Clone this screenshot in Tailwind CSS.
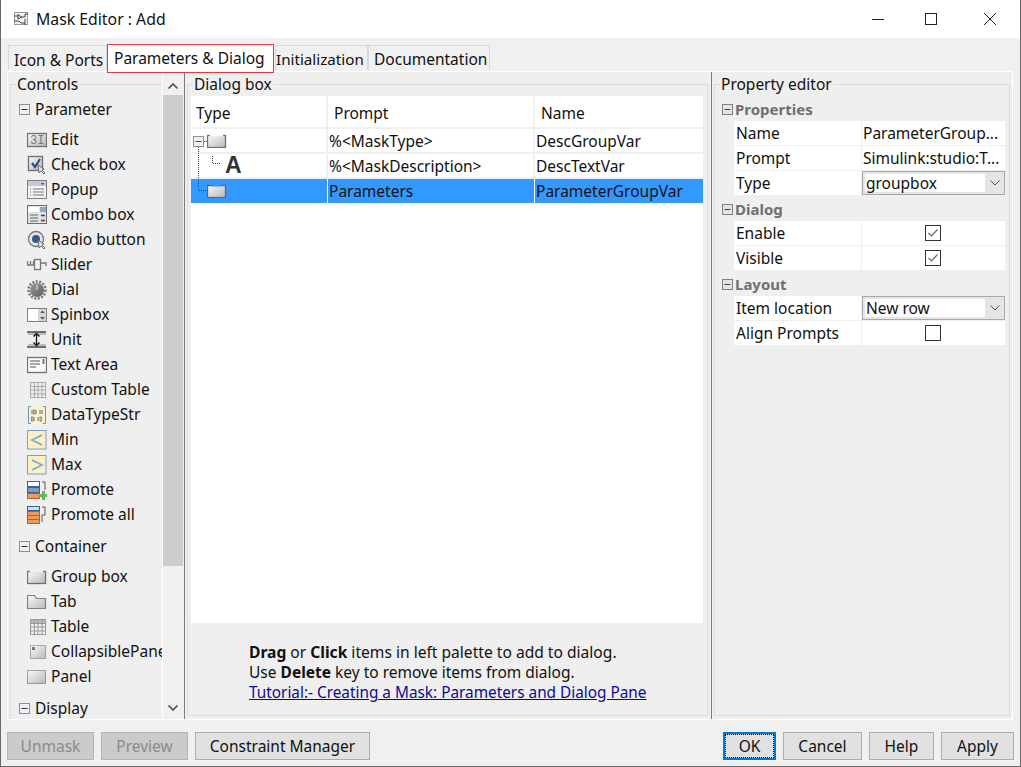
<!DOCTYPE html>
<html lang="en">
<head>
  <meta charset="UTF-8" />
  <title>Mask Editor : Add</title>
  <script src="https://cdn.jsdelivr.net/npm/@tailwindcss/browser@4"></script>
</head>
<body class="bg-[#555]">
<svg width="0" height="0" class="absolute"><defs>
  <linearGradient id="fade" x1="0" y1="0" x2="1" y2="1"><stop offset="0" stop-color="#fafafa"/><stop offset="1" stop-color="#b8b8b8"/></linearGradient>
  <linearGradient id="dial" x1="0" y1="0" x2="1" y2="1"><stop offset="0" stop-color="#9a9a9a"/><stop offset="1" stop-color="#5e5e5e"/></linearGradient>
</defs></svg>
<div class="w-[1021px] h-[767px] overflow-hidden flex flex-col bg-[#f0f0f0] border-x border-b border-[#6a6a6a] font-['Noto_Sans',sans-serif] text-[15.5px] leading-none text-[#111]">

  <!-- title bar -->
  <header class="h-[38px] shrink-0 bg-white flex items-center pl-[12px]">
    <svg width="16" height="16" viewBox="0 0 16 16" class="mr-[7px]" fill="none" stroke="#444"><rect x="1.500" y="1.500" width="13" height="12" fill="#f4f4f4" stroke="#999"/><path d="M1 5h4M5 3v5l4-2-4-2M9 6h3v-3h3M1 10h5l2 2h4M12 8v6"/></svg>
    <span class="text-[15.8px] mt-[2px]">Mask Editor : Add</span>
    <div class="ml-auto flex items-center">
      <svg width="12" height="12" viewBox="0 0 12 12" class="mr-[41px]" stroke="#222" fill="none"><path d="M0 6.500h12"/></svg>
      <svg width="12" height="12" viewBox="0 0 12 12" class="mr-[46px]" stroke="#222" fill="none"><rect x=".5" y=".5" width="11" height="11"/></svg>
      <svg width="14" height="14" viewBox="0 0 14 14" class="mr-[23px]" stroke="#222" fill="none"><path d="M1 1l12 12M13 1L1 13"/></svg>
    </div>
  </header>

  <!-- tabs -->
  <nav class="h-[33px] shrink-0 flex items-end pl-[7px]">
    <div class="h-[25px] w-[99px] mb-[1px] bg-[#f0f0f0] border border-b-0 border-[#d9d9d9] flex items-center pl-[5px] pt-[5px]">Icon &amp; Ports</div>
    <div class="h-[29px] w-[167px] bg-white border border-[#e8383d] flex items-center pl-[6px] -mb-[2px] z-10">Parameters &amp; Dialog</div>
    <div class="h-[25px] w-[93px] mb-[1px] ml-[1px] bg-[#f0f0f0] border border-b-0 border-[#d9d9d9] flex items-center pt-[4px] text-[15.2px]">Initialization</div>
    <div class="h-[25px] w-[122px] mb-[1px] bg-[#f0f0f0] border border-b-0 border-[#d9d9d9] flex items-center pl-[5px] pt-[4px]">Documentation</div>
  </nav>

  <!-- main frame -->
  <main class="h-[649px] shrink-0 ml-[6px] mr-[7px] flex bg-[#efefef] border border-white">

    <!-- controls palette -->
    <section class="w-[176px] shrink-0 flex relative overflow-hidden">
      <span class="absolute left-[8px] top-[5px] bg-[#efefef] px-[1px] h-[16px] z-10">Controls</span>
      <div class="w-[152px] shrink-0 ml-[2px] mt-[12px] border-l border-t border-[#dcdcdc] overflow-hidden whitespace-nowrap">
        <div class="w-[151px]">
          <div class="h-[25px] mt-[12px] flex items-center pl-[8px] gap-[5px]">
            <svg class="shrink-0" width="11" height="11" viewBox="0 0 11 11" fill="none"><rect x=".5" y=".5" width="10" height="10" fill="#eef0f5" stroke="#8a8f99"/><path d="M2.500 5.500h6" stroke="#334"/></svg>Parameter
          </div>
          <ul class="mt-[5px]">
            <li class="h-[25px] flex items-center pl-[16px] gap-[4px]">
              <svg class="shrink-0" width="20" height="20" viewBox="0 0 20 20" fill="none"><rect x=".5" y="3.500" width="19" height="13" fill="url(#fade)" stroke="#707070" stroke-width="1.300"/><text x="3" y="14" font-size="12" font-family="Liberation Mono" fill="#777">3I</text></svg>Edit
            </li>
            <li class="h-[25px] flex items-center pl-[16px] gap-[4px]">
              <svg class="shrink-0" width="20" height="20" viewBox="0 0 20 20" fill="none"><rect x="1.500" y="1.500" width="14" height="14" fill="url(#fade)" stroke="#6f6f6f" stroke-width="1.300"/><path d="M5 8l3 4 5-8" stroke="#2b4f8a" stroke-width="2.200"/><path d="M11 10l1 8 2-2 3 3 1-1-3-3 2-1z" fill="#ddd" stroke="#555" stroke-width=".8"/></svg>Check box
            </li>
            <li class="h-[25px] flex items-center pl-[16px] gap-[4px]">
              <svg class="shrink-0" width="20" height="20" viewBox="0 0 20 20" fill="none"><rect x=".5" y=".5" width="19" height="18" fill="#f4f4f4" stroke="#808080"/><rect x="1" y="1" width="18" height="5" fill="#c3c9d4"/><path d="M14 3h3l-1.500 2z" fill="#444"/><path d="M3 9h1M6 9h11M3 12h1M6 12h11M3 15h1M6 15h11" stroke="#777"/></svg>Popup
            </li>
            <li class="h-[25px] flex items-center pl-[16px] gap-[4px]">
              <svg class="shrink-0" width="20" height="20" viewBox="0 0 20 20" fill="none"><rect x=".5" y=".5" width="19" height="18" fill="#dfe1e5" stroke="#707070"/><rect x="1" y="2" width="11" height="5" fill="#fff"/><rect x="13" y="2" width="6" height="5" fill="#8fa9cc"/><path d="M3 10h8M3 13h8M3 16h8" stroke="#666"/><path d="M14 10.500h4M14 15.500h4" stroke="#444" stroke-width="1.500"/></svg>Combo box
            </li>
            <li class="h-[25px] flex items-center pl-[16px] gap-[4px]">
              <svg class="shrink-0" width="20" height="20" viewBox="0 0 20 20" fill="none"><circle cx="9" cy="9" r="7.500" fill="#e6e6e6" stroke="#777" stroke-width="1.300"/><circle cx="9" cy="9" r="4" fill="#34598c"/><path d="M11 10l1 8 2-2 3 3 1-1-3-3 2-1z" fill="#ddd" stroke="#555" stroke-width=".8"/></svg>Radio button
            </li>
            <li class="h-[25px] flex items-center pl-[16px] gap-[4px]">
              <svg class="shrink-0" width="20" height="20" viewBox="0 0 20 20" fill="none"><path d="M.5 6v4h6V6M3.500 6v4M13.500 8h5.500v3" stroke="#777" stroke-width="1.300"/><rect x="7.500" y="4.500" width="6" height="10" fill="#f2f2f2" stroke="#777" stroke-width="1.300"/></svg>Slider
            </li>
            <li class="h-[25px] flex items-center pl-[16px] gap-[4px]">
              <svg class="shrink-0" width="20" height="20" viewBox="0 0 20 20" fill="none"><circle cx="10" cy="10" r="8.500" stroke="#777" stroke-dasharray="2 1.500" stroke-width="2.500"/><circle cx="10" cy="10" r="7" fill="url(#dial)"/><path d="M10 4.500v5.500" stroke="#eee"/></svg>Dial
            </li>
            <li class="h-[25px] flex items-center pl-[16px] gap-[4px]">
              <svg class="shrink-0" width="20" height="20" viewBox="0 0 20 20" fill="none"><rect x=".5" y="3.500" width="19" height="13" fill="#d6d6d6" stroke="#808080"/><rect x="1" y="4" width="10" height="12" fill="#fff"/><path d="M13 8l2.500-2.500L18 8zM13 12l2.500 2.500L18 12z" fill="#555"/></svg>Spinbox
            </li>
            <li class="h-[25px] flex items-center pl-[16px] gap-[4px]">
              <svg class="shrink-0" width="20" height="20" viewBox="0 0 20 20" fill="none"><path d="M0 2h19M0 17h19" stroke="#444" stroke-width="1.500"/><path d="M1 4h18M1 15h18" stroke="#bbb" stroke-width="2"/><path d="M9.500 4v11M6.500 6.500l3-3 3 3M6.500 12.500l3 3 3-3" stroke="#111" stroke-width="1.300"/></svg>Unit
            </li>
            <li class="h-[25px] flex items-center pl-[16px] gap-[4px]">
              <svg class="shrink-0" width="20" height="20" viewBox="0 0 20 20" fill="none"><rect x=".5" y="2.500" width="19" height="15" fill="#fafafa" stroke="#707070" stroke-width="1.300"/><path d="M3 6h10M3 9h10M3 12h6" stroke="#555" stroke-width="1.200"/><path d="M16.500 4v5" stroke="#777" stroke-width="2"/></svg>Text Area
            </li>
            <li class="h-[25px] flex items-center pl-[16px] gap-[4px]">
              <svg class="shrink-0" width="20" height="20" viewBox="0 0 20 20" fill="none"><rect x="3.500" y="2.500" width="15" height="15" fill="#f0f0f0" stroke="#aaa"/><path d="M3 6.500h15M3 10h15M3 14h15M7.500 3v14M11 3v14M15 3v14" stroke="#aaa"/></svg>Custom Table
            </li>
            <li class="h-[25px] flex items-center pl-[16px] gap-[4px]">
              <svg class="shrink-0" width="20" height="20" viewBox="0 0 20 20" fill="none"><rect x="1" y="1" width="18" height="18" fill="#fbf3d0"/><path d="M4 1.500H1.500v17H4M16 1.500h2.500v17H16" stroke="#6d8fb8"/><path d="M5 5v4M9 5v4M13 5v4M15 5v4M7 12v4M11 12v4" stroke="#666"/><rect x="6.500" y="5" width="1.500" height="4" stroke="#666" stroke-width=".7"/><rect x="4.500" y="12" width="1.500" height="4" stroke="#666" stroke-width=".7"/><rect x="13" y="12" width="1.500" height="4" stroke="#666" stroke-width=".7"/></svg>DataTypeStr
            </li>
            <li class="h-[25px] flex items-center pl-[16px] gap-[4px]">
              <svg class="shrink-0" width="20" height="20" viewBox="0 0 20 20" fill="none"><rect x=".5" y=".5" width="18.500" height="18.500" fill="#fbf0c4" stroke="#7d9cc4"/><path d="M15 5L5 10l10 5" stroke="#8aa6cc" stroke-width="1.800"/></svg>Min
            </li>
            <li class="h-[25px] flex items-center pl-[16px] gap-[4px]">
              <svg class="shrink-0" width="20" height="20" viewBox="0 0 20 20" fill="none"><rect x=".5" y=".5" width="18.500" height="18.500" fill="#fbf0c4" stroke="#7d9cc4"/><path d="M5 5l10 5-10 5" stroke="#8aa6cc" stroke-width="1.800"/></svg>Max
            </li>
            <li class="h-[25px] flex items-center pl-[16px] gap-[4px]">
              <svg class="shrink-0" width="20" height="20" viewBox="0 0 20 20" fill="none"><rect x=".5" y="1.500" width="12" height="5" fill="#fff" stroke="#3a5f92"/><rect x=".5" y="7.500" width="12" height="5" fill="#7d9cc4" stroke="#3a5f92"/><rect x=".5" y="13.500" width="12" height="5" fill="#ee9a5d" stroke="#b0622a"/><path d="M15 2h3v8" stroke="#555"/><path d="M15 11h3v3h2v3h-2v3h-3v-3h-3v-3h3z" fill="#5fb85a"/></svg>Promote
            </li>
            <li class="h-[25px] flex items-center pl-[16px] gap-[4px]">
              <svg class="shrink-0" width="20" height="20" viewBox="0 0 20 20" fill="none"><rect x=".5" y="1.500" width="12" height="4" fill="#cfdcee" stroke="#3a5f92"/><rect x=".5" y="6.500" width="12" height="4" fill="#ee9a5d" stroke="#b0622a"/><rect x=".5" y="10.500" width="12" height="4" fill="#ee9a5d" stroke="#b0622a"/><rect x=".5" y="14.500" width="12" height="4" fill="#ee9a5d" stroke="#b0622a"/><path d="M15 2h3v8h-3M15 10v7" stroke="#555"/></svg>Promote all
            </li>
          </ul>
          <div class="h-[25px] mt-[7px] flex items-center pl-[8px] gap-[5px]">
            <svg class="shrink-0" width="11" height="11" viewBox="0 0 11 11" fill="none"><rect x=".5" y=".5" width="10" height="10" fill="#eef0f5" stroke="#8a8f99"/><path d="M2.500 5.500h6" stroke="#334"/></svg>Container
          </div>
          <ul class="mt-[5px]">
            <li class="h-[25px] flex items-center pl-[16px] gap-[4px]">
              <svg class="shrink-0" width="20" height="20" viewBox="0 0 20 20" fill="none"><rect x=".5" y="4.500" width="18" height="12" fill="url(#fade)" stroke="#707070" stroke-width="1.300"/><rect x="3" y="3" width="13" height="2.500" fill="#efefef"/></svg>Group box
            </li>
            <li class="h-[25px] flex items-center pl-[16px] gap-[4px]">
              <svg class="shrink-0" width="20" height="20" viewBox="0 0 20 20" fill="none"><path d="M.5 16.500v-13h7l2 3h9v10z" fill="url(#fade)" stroke="#808080" stroke-width="1.200"/></svg>Tab
            </li>
            <li class="h-[25px] flex items-center pl-[16px] gap-[4px]">
              <svg class="shrink-0" width="20" height="20" viewBox="0 0 20 20" fill="none"><rect x="3.500" y="2.500" width="15" height="15" fill="#f0f0f0" stroke="#999"/><rect x="4" y="3" width="14" height="3" fill="#bbb"/><path d="M3 6.500h15M3 10h15M3 14h15M7.500 3v14M11 3v14M15 3v14" stroke="#999"/></svg>Table
            </li>
            <li class="h-[25px] flex items-center pl-[16px] gap-[4px]">
              <svg class="shrink-0" width="20" height="20" viewBox="0 0 20 20" fill="none"><rect x="3.500" y="3.500" width="15" height="13" fill="url(#fade)" stroke="#666" stroke-dasharray="1 1"/><rect x="5" y="5" width="3" height="3" fill="#777"/></svg>CollapsiblePanel
            </li>
            <li class="h-[25px] flex items-center pl-[16px] gap-[4px]">
              <svg class="shrink-0" width="20" height="20" viewBox="0 0 20 20" fill="none"><rect x=".5" y="3.500" width="18" height="13" fill="url(#fade)" stroke="#555" stroke-dasharray="1 1"/></svg>Panel
            </li>
          </ul>
          <div class="h-[25px] mt-[7px] flex items-center pl-[8px] gap-[5px]">
            <svg class="shrink-0" width="11" height="11" viewBox="0 0 11 11" fill="none"><rect x=".5" y=".5" width="10" height="10" fill="#eef0f5" stroke="#8a8f99"/><path d="M2.500 5.500h6" stroke="#334"/></svg>Display
          </div>
        </div>
      </div>
      <!-- scrollbar -->
      <div class="w-[21px] shrink-0 border-l border-white flex flex-col items-center pt-[11px] bg-[#f0f0f0]">
        <svg width="10" height="6" viewBox="0 0 10 6" fill="none" stroke="#444" stroke-width="1.500"><path d="M.5 5.500L5 1l4.500 4.500"/></svg>
        <div class="w-[20px] h-[471px] mt-[6px] bg-[#cdcdcd]"></div>
        <svg width="10" height="6" viewBox="0 0 10 6" fill="none" stroke="#444" stroke-width="1.500" class="mt-[139px]"><path d="M.5.500L5 5l4.500-4.500"/></svg>
      </div>
    </section>

    <div class="w-px shrink-0 bg-[#7c7c7c]"></div>

    <!-- dialog box -->
    <section class="w-[526px] shrink-0 relative pl-[2px]">
      <span class="absolute left-[8px] top-[5px] bg-[#efefef] px-[1px] h-[16px] z-10">Dialog box</span>
      <div class="w-[521px] h-[632px] mt-[12px] border border-[#dcdcdc] pl-[3px] pt-[11px]">
        <div class="relative w-[512px] h-[527px] bg-white">
          <div class="h-[33px] flex border-b-2 border-[#f0f0f0]">
            <div class="w-[137px] pl-[5px] pt-[4px] flex items-center border-r-2 border-[#f0f0f0]">Type</div>
            <div class="w-[207px] pl-[6px] pt-[4px] flex items-center border-r-2 border-[#f0f0f0]">Prompt</div>
            <div class="flex-1 pl-[6px] pt-[4px] flex items-center">Name</div>
          </div>
          <div class="h-[25px] flex border-b-2 border-[#f0f0f0]">
            <div class="w-[137px] pl-[16px] flex items-center border-r-2 border-[#f0f0f0]">
              <svg width="20" height="14" viewBox="0 0 20 14" fill="none"><rect x=".5" y="1.500" width="18" height="12" fill="url(#fade)" stroke="#707070" stroke-width="1.300"/><rect x="3" y="0" width="13" height="2.500" fill="#fff"/></svg>
            </div>
            <div class="w-[207px] pl-[1px] pt-[2px] flex items-center border-r-2 border-[#f0f0f0]">%&lt;MaskType&gt;</div>
            <div class="flex-1 pl-[1px] pt-[2px] flex items-center">DescGroupVar</div>
          </div>
          <div class="h-[25px] flex border-b-2 border-[#f0f0f0]">
            <div class="w-[137px] pl-[34px] flex items-center border-r-2 border-[#f0f0f0] font-['Liberation_Sans',sans-serif] font-bold text-[23px] text-[#333]">A</div>
            <div class="w-[207px] pl-[1px] pt-[2px] flex items-center border-r-2 border-[#f0f0f0]">%&lt;MaskDescription&gt;</div>
            <div class="flex-1 pl-[1px] pt-[2px] flex items-center">DescTextVar</div>
          </div>
          <div class="h-[24px] flex bg-[#3399ff]">
            <div class="w-[137px] pl-[16px] flex items-center border-r border-white">
              <svg width="20" height="14" viewBox="0 0 20 14" fill="none"><rect x=".5" y="1.500" width="18" height="12" fill="url(#fade)" stroke="#666" stroke-width="1.300"/><rect x="5" y="0" width="9" height="2.500" fill="#3399ff"/></svg>
            </div>
            <div class="w-[207px] pl-[1px] pt-[2px] flex items-center border-r border-white">Parameters</div>
            <div class="flex-1 pl-[1px] pt-[2px] flex items-center">ParameterGroupVar</div>
          </div>
          <!-- tree lines over the type column -->
          <svg class="absolute left-0 top-0" width="40" height="110" viewBox="0 0 40 110" fill="none">
            <rect x="2.500" y="40.500" width="10" height="10" fill="#eef0f5" stroke="#8a8f99"/>
            <path d="M4.500 45.500h6" stroke="#334b8a"/>
            <path d="M7.500 51v43.500h9M13 45.500h3M21.500 60v7.500h8" stroke="#444" stroke-dasharray="1 1"/>
          </svg>
        </div>
        <div class="pl-[58px] pt-[22px] flex flex-col gap-[5px] leading-[15px]">
          <p class="text-[15.6px]"><b>Drag</b> or <b>Click</b> items in left palette to add to dialog.</p>
          <p><b class="font-normal">Use</b> <b>Delete</b> key to remove items from dialog.</p>
          <a class="underline text-[15.35px] text-[#0a0a9c]" href="#">Tutorial:- Creating a Mask: Parameters and Dialog Pane</a>
        </div>
      </div>
    </section>

    <div class="w-px shrink-0 bg-[#7c7c7c]"></div>

    <!-- property editor -->
    <section class="flex-1 relative pl-[2px]">
      <span class="absolute left-[8px] top-[5px] bg-[#efefef] px-[1px] h-[16px] z-10">Property editor</span>
      <div class="w-[296px] h-[632px] mt-[12px] border border-[#dcdcdc] pl-[7px] pt-[11px]">
        <div class="h-[25px] pt-[2px] flex items-center gap-[2px] font-bold text-[15px] text-[#707070]">
          <svg width="11" height="11" viewBox="0 0 11 11" fill="none"><rect x=".5" y=".5" width="10" height="10" fill="#e4e4e4" stroke="#808080"/><path d="M2.500 5.500h6" stroke="#444"/></svg>Properties
        </div>
        <div class="ml-[12px] w-[271px] flex flex-col gap-px">
          <div class="h-[24px] flex gap-px"><div class="w-[127px] bg-white pl-[2px] pt-[2px] flex items-center">Name</div><div class="flex-1 bg-white pl-[1px] pt-[2px] flex items-center">ParameterGroup...</div></div>
          <div class="h-[24px] flex gap-px"><div class="w-[127px] bg-white pl-[2px] pt-[2px] flex items-center">Prompt</div><div class="flex-1 bg-white pl-[1px] pt-[2px] flex items-center">Simulink:studio:T...</div></div>
          <div class="h-[24px] flex gap-px"><div class="w-[127px] bg-white pl-[2px] pt-[2px] flex items-center">Type</div>
            <div class="flex-1 bg-[#e5e5e5] border border-[#a8a8a8] flex items-center"><span class="w-[120px] h-[18px] ml-[2px] bg-white flex items-center pl-[1px] pt-[2px]">groupbox</span><svg class="ml-[5px]" width="10" height="6" viewBox="0 0 10 6" fill="none" stroke="#555"><path d="M.5.500L5 5l4.500-4.500"/></svg></div>
          </div>
        </div>
        <div class="h-[25px] mt-[1px] pt-[2px] flex items-center gap-[2px] font-bold text-[15px] text-[#707070]">
          <svg width="11" height="11" viewBox="0 0 11 11" fill="none"><rect x=".5" y=".5" width="10" height="10" fill="#e4e4e4" stroke="#808080"/><path d="M2.500 5.500h6" stroke="#444"/></svg>Dialog
        </div>
        <div class="ml-[12px] w-[271px] flex flex-col gap-px">
          <div class="h-[24px] flex gap-px"><div class="w-[127px] bg-white pl-[2px] pt-[2px] flex items-center">Enable</div><div class="flex-1 bg-white flex items-center justify-center pr-[2px]">
            <svg width="16" height="16" viewBox="0 0 16 16" fill="none"><rect x=".5" y=".5" width="15" height="15" stroke="#333"/><path d="M3.500 8l3 3 6-6.500" stroke="#666" stroke-width="1.200"/></svg></div></div>
          <div class="h-[24px] flex gap-px"><div class="w-[127px] bg-white pl-[2px] pt-[2px] flex items-center">Visible</div><div class="flex-1 bg-white flex items-center justify-center pr-[2px]">
            <svg width="16" height="16" viewBox="0 0 16 16" fill="none"><rect x=".5" y=".5" width="15" height="15" stroke="#333"/><path d="M3.500 8l3 3 6-6.500" stroke="#666" stroke-width="1.200"/></svg></div></div>
        </div>
        <div class="h-[25px] mt-[1px] pt-[2px] flex items-center gap-[2px] font-bold text-[15px] text-[#707070]">
          <svg width="11" height="11" viewBox="0 0 11 11" fill="none"><rect x=".5" y=".5" width="10" height="10" fill="#e4e4e4" stroke="#808080"/><path d="M2.500 5.500h6" stroke="#444"/></svg>Layout
        </div>
        <div class="ml-[12px] w-[271px] flex flex-col gap-px">
          <div class="h-[24px] flex gap-px"><div class="w-[127px] bg-white pl-[2px] pt-[2px] flex items-center">Item location</div>
            <div class="flex-1 bg-[#e5e5e5] border border-[#a8a8a8] flex items-center"><span class="w-[120px] h-[18px] ml-[2px] bg-white flex items-center pl-[1px] pt-[2px]">New row</span><svg class="ml-[5px]" width="10" height="6" viewBox="0 0 10 6" fill="none" stroke="#555"><path d="M.5.500L5 5l4.500-4.500"/></svg></div>
          </div>
          <div class="h-[24px] flex gap-px"><div class="w-[127px] bg-white pl-[2px] pt-[2px] flex items-center">Align Prompts</div><div class="flex-1 bg-white flex items-center justify-center pr-[2px]">
            <span class="w-[16px] h-[16px] border border-[#333]"></span></div></div>
        </div>
      </div>
    </section>
  </main>

  <!-- bottom buttons -->
  <footer class="flex mt-[12px] ml-[6px] mr-[6px] h-[28px] gap-[7px]">
    <button class="w-[87px] pt-[2px] bg-[#cbcbcb] border border-[#b5b5b5] text-[#8a8a8a]">Unmask</button>
    <button class="w-[87px] pt-[2px] bg-[#cbcbcb] border border-[#b5b5b5] text-[#8a8a8a]">Preview</button>
    <button class="w-[175px] pt-[2px] bg-[#e1e1e1] border border-[#adadad]">Constraint Manager</button>
    <button class="w-[53px] pt-[2px] ml-auto bg-[#e1e1e1] border-2 border-[#0078d7] outline-1 outline-dotted -outline-offset-3 outline-black">OK</button>
    <button class="w-[79px] pt-[2px] bg-[#e1e1e1] border border-[#adadad]">Cancel</button>
    <button class="w-[65px] pt-[2px] bg-[#e1e1e1] border border-[#adadad]">Help</button>
    <button class="w-[73px] pt-[2px] bg-[#e1e1e1] border border-[#adadad]">Apply</button>
  </footer>
</div>
</body>
</html>
